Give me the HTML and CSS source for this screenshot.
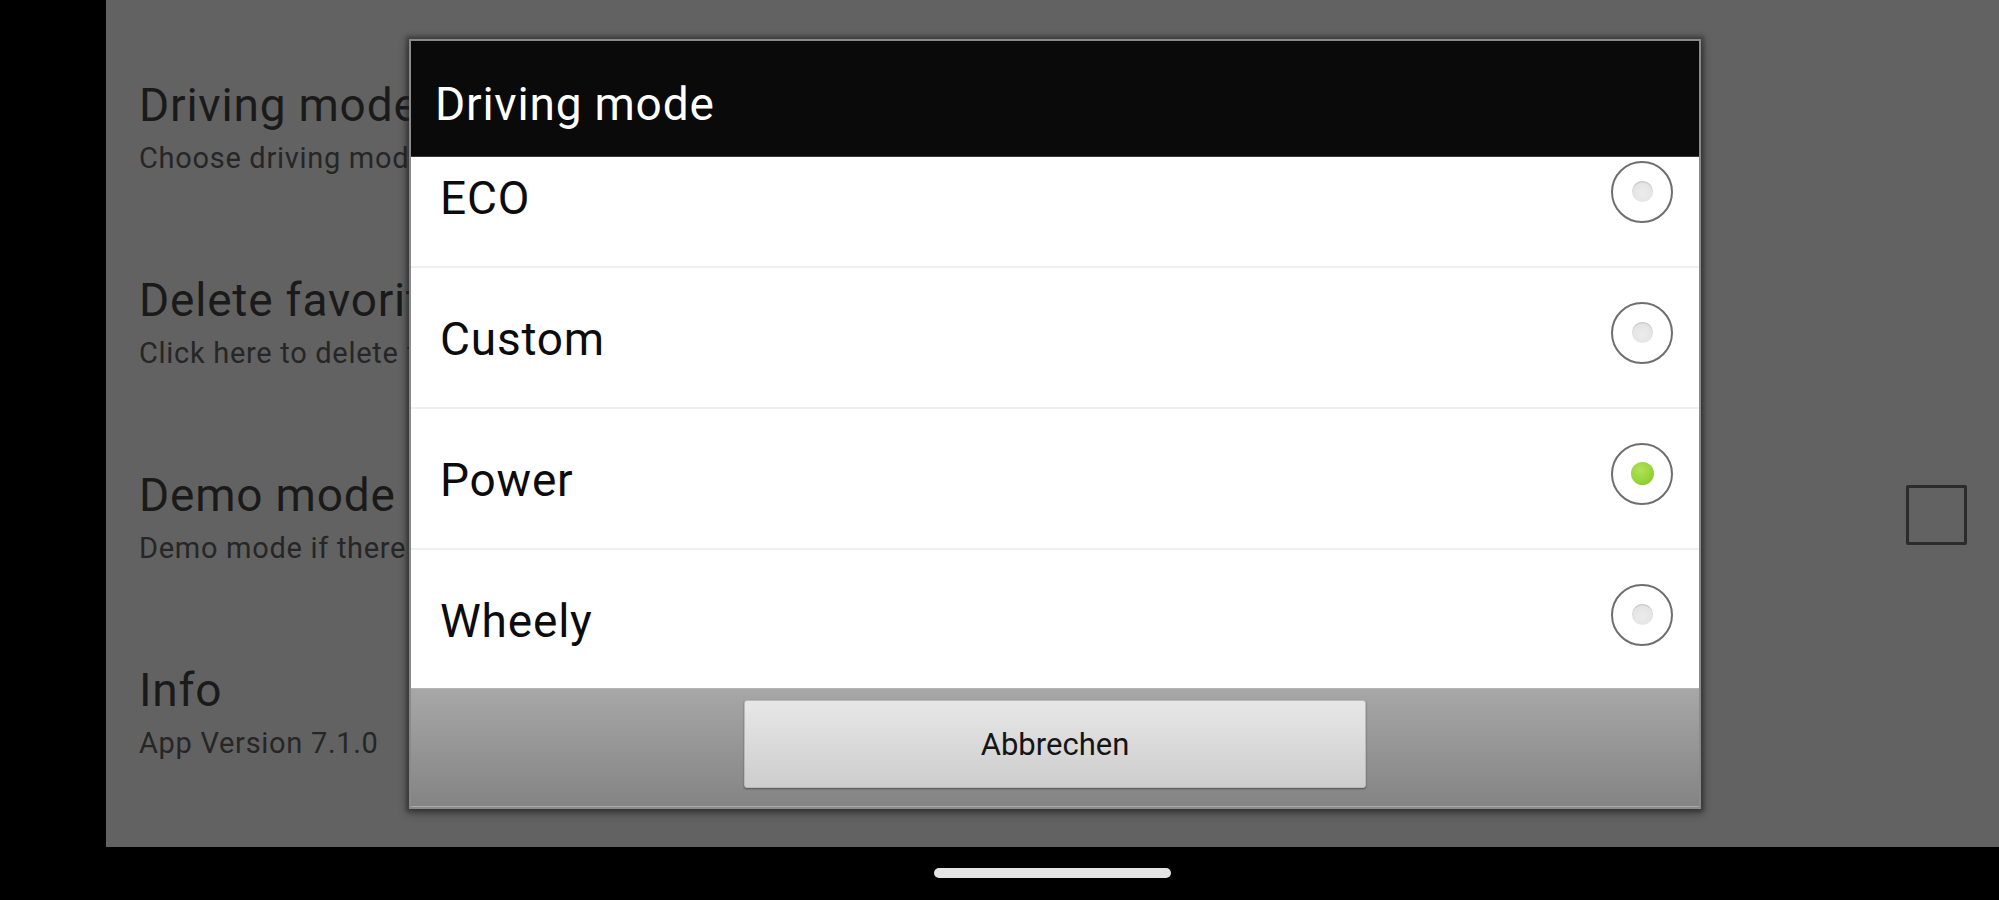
FILE: index.html
```html
<!DOCTYPE html>
<html>
<head>
<meta charset="utf-8">
<link rel="stylesheet" href="styles.css">
</head>
<body>
<div class="screen">
  <div class="side"></div>
  <div class="main">
    <div class="panel">
      <div class="prefs">
        <div class="pref">
          <div class="pref-text">
            <div class="pref-title">Driving mode</div>
            <div class="pref-sub">Choose driving mode</div>
          </div>
        </div>
        <div class="pref">
          <div class="pref-text">
            <div class="pref-title">Delete favorites</div>
            <div class="pref-sub">Click here to delete favorites</div>
          </div>
        </div>
        <div class="pref">
          <div class="pref-text">
            <div class="pref-title">Demo mode</div>
            <div class="pref-sub">Demo mode if there is no connection</div>
          </div>
          <div class="checkbox"></div>
        </div>
        <div class="pref">
          <div class="pref-text">
            <div class="pref-title">Info</div>
            <div class="pref-sub">App Version 7.1.0</div>
          </div>
        </div>
      </div>

      <div class="overlay">
        <div class="dialog">
          <div class="dlg-title">Driving mode</div>
          <div class="dlg-list">
            <div class="dlg-items">
              <div class="item"><span class="item-label">ECO</span><span class="radio"><span class="dot"></span></span></div>
              <div class="item"><span class="item-label">Custom</span><span class="radio"><span class="dot"></span></span></div>
              <div class="item"><span class="item-label">Power</span><span class="radio"><span class="dot on"></span></span></div>
              <div class="item"><span class="item-label">Wheely</span><span class="radio"><span class="dot"></span></span></div>
            </div>
          </div>
          <div class="dlg-buttons">
            <div class="btn">Abbrechen</div>
          </div>
        </div>
      </div>
    </div>
    <div class="navbar"><div class="pill"></div></div>
  </div>
</div>
</body>
</html>
```

FILE: styles.css
```css
html, body {
  margin: 0;
  padding: 0;
  background: #000;
}
body {
  width: 1999px;
  height: 900px;
  overflow: hidden;
  font-family: Roboto, "Noto Sans", "Liberation Sans", sans-serif;
}
.screen {
  display: flex;
  width: 1999px;
  height: 900px;
}
.side {
  width: 106px;
  background: #000;
  flex: none;
}
.main {
  flex: 1;
  display: flex;
  flex-direction: column;
}
.panel {
  position: relative;
  height: 847px;
  background: #626262;
  overflow: hidden;
}
.prefs {
  padding-top: 38px;
}
.pref {
  height: 195px;
  box-sizing: border-box;
  padding: 40px 32px 0 33px;
  display: flex;
  align-items: flex-start;
  justify-content: space-between;
}
.pref-text {
  flex: 1;
  white-space: nowrap;
}
.pref-title {
  font-size: 46px;
  line-height: 54px;
  letter-spacing: 0.8px;
  color: #1a1a1a;
}
.pref-sub {
  font-size: 29px;
  line-height: 52px;
  letter-spacing: 0.7px;
  color: #262626;
}
.checkbox {
  width: 55px;
  height: 54px;
  margin-top: 17px;
  border: 3px solid #2b2b2b;
  border-radius: 2px;
  flex: none;
}

/* dialog overlay */
.overlay {
  position: absolute;
  inset: 0;
  display: flex;
  align-items: center;
  justify-content: center;
  padding-left: 5px;
}
.dialog {
  width: 1288px;
  height: 766px;
  border: 2px solid #8a8a8a;
  box-shadow: 0 0 4px 3px rgba(40,40,40,0.55), 0 3px 10px rgba(0,0,0,0.4);
  display: flex;
  flex-direction: column;
  background: #fff;
}
.dlg-title {
  height: 116px;
  box-sizing: border-box;
  padding: 10px 0 0 24px;
  line-height: 106px;
  font-size: 46px;
  letter-spacing: 0.8px;
  color: #ffffff;
  background: #0a0a0a;
  border-bottom: 1px solid #3a3a3a;
}
.dlg-list {
  height: 531px;
  overflow: hidden;
  background: #fff;
}
.dlg-items {
  margin-top: -30px;
}
.item {
  height: 139px;
  border-bottom: 2px solid #efefef;
  display: flex;
  align-items: flex-start;
  justify-content: space-between;
  padding: 0 26px 0 29px;
}
.item-label {
  margin-top: 44px;
  font-size: 46px;
  line-height: 54px;
  letter-spacing: 0.8px;
  color: #0c0c0c;
}
.radio {
  margin-top: 34px;
  width: 58px;
  height: 58px;
  border: 2.5px solid #6e6e6e;
  border-radius: 50%;
  display: flex;
  align-items: center;
  justify-content: center;
  background: #fff;
}
.dot {
  width: 21px;
  height: 21px;
  border-radius: 50%;
  background: radial-gradient(circle at 50% 60%, #ececec 0%, #e4e4e4 60%, #cfcfcf 100%);
  box-shadow: inset 0 1px 1px rgba(0,0,0,0.12);
}
.dot.on {
  width: 23px;
  height: 23px;
  background: radial-gradient(circle at 40% 35%, #b2e25a 0%, #97d53a 55%, #82c425 100%);
  box-shadow: none;
}
.dlg-buttons {
  flex: 1;
  background: linear-gradient(#a7a7a7, #848484);
  border-top: 1px solid #b4b4b4;
  border-bottom: 1px solid #a9a9a9;
  display: flex;
  justify-content: center;
  align-items: flex-start;
}
.btn {
  margin-top: 11px;
  width: 620px;
  height: 86px;
  border: 1px solid #b9b9b9;
  border-radius: 3px;
  background: linear-gradient(#e7e7e7, #cdcdcd);
  box-shadow: 0 1px 2px rgba(0,0,0,0.4);
  text-align: center;
  font-size: 31px;
  line-height: 88px;
  color: #151515;
}

.navbar {
  flex: 1;
  background: #000;
  display: flex;
  justify-content: center;
  align-items: flex-start;
}
.pill {
  margin-top: 21px;
  width: 237px;
  height: 10px;
  border-radius: 5px;
  background: #e4e4e4;
}
```
